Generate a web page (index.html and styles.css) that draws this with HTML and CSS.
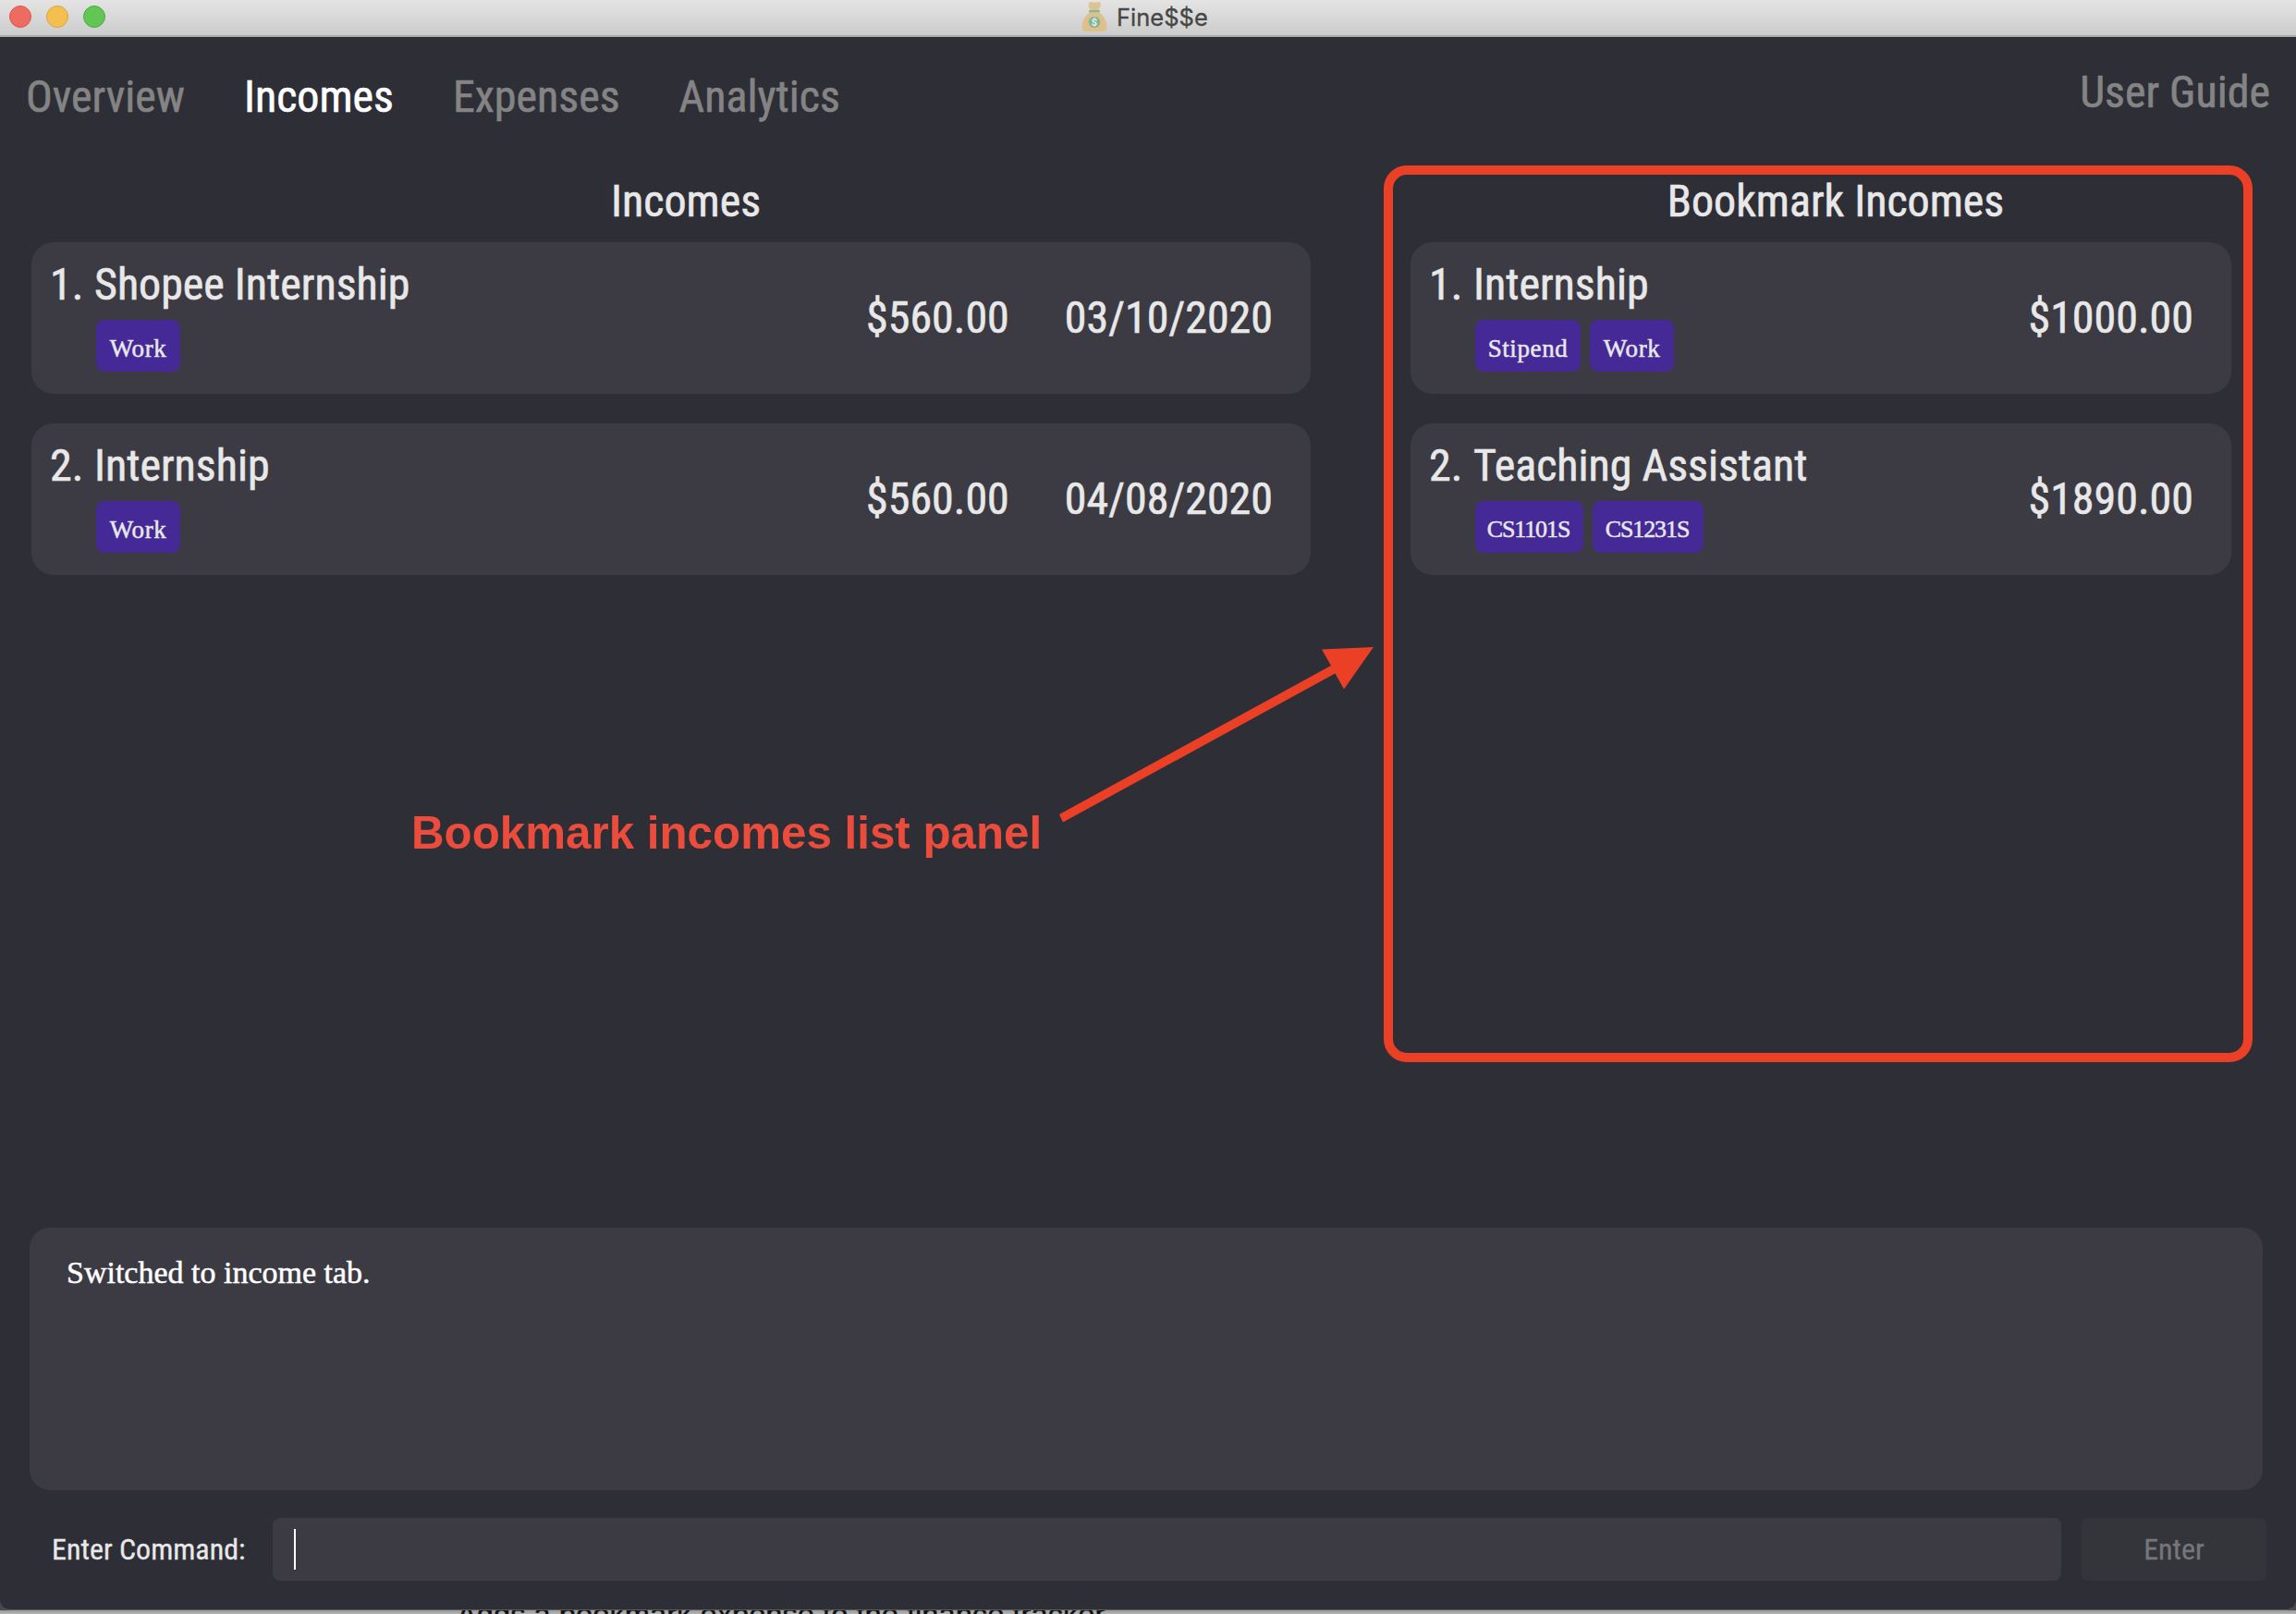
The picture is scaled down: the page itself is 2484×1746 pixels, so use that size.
FILE: index.html
```html
<!DOCTYPE html>
<html lang="en">
<head>
<meta charset="utf-8">
<title>Fine$$e</title>
<link rel="stylesheet" href="styles.css">
</head>
<body>
<div class="window">
  <header class="titlebar">
    <div class="lights"><i class="light red"></i><i class="light yellow"></i><i class="light green"></i></div>
    <div class="title">
      <svg class="bag" viewBox="0 0 28 32" width="28" height="32">
        <path d="M8 1.500Q9 0 11 .3Q14 1 17 .3Q20-.2 21 1.500Q21 5 18.500 9H9.500Q7 5 8 1.500Z" fill="#dcc394"/>
        <path d="M9 11H19Q27 18 27.500 26Q28 32 22 32H6Q0 32 .5 26Q1 18 9 11Z" fill="#dec08c"/>
        <rect x="8" y="9" width="12" height="2.200" rx="1" fill="#82baa0"/>
        <circle cx="14" cy="22" r="6.200" fill="#82b597"/>
        <text x="14" y="26.200" text-anchor="middle" class="bag-sign">$</text>
      </svg>
      <span class="title-text">Fine$$e</span>
    </div>
  </header>
  <nav class="nav">
    <div class="tabs">
      <a class="tab">Overview</a><a class="tab active">Incomes</a><a class="tab">Expenses</a><a class="tab">Analytics</a>
    </div>
    <a class="tab guide">User Guide</a>
  </nav>
  <main class="panels">
    <section class="panel incomes">
      <h2 class="heading">Incomes</h2>
      <article class="card">
        <span class="index">1.</span>
        <div class="info"><div class="name">Shopee Internship</div><div class="tags"><span class="tag">Work</span></div></div>
        <span class="amount">$560.00</span><span class="date">03/10/2020</span>
      </article>
      <article class="card">
        <span class="index">2.</span>
        <div class="info"><div class="name">Internship</div><div class="tags"><span class="tag">Work</span></div></div>
        <span class="amount">$560.00</span><span class="date">04/08/2020</span>
      </article>
    </section>
    <section class="panel bookmarks">
      <h2 class="heading">Bookmark Incomes</h2>
      <article class="card">
        <span class="index">1.</span>
        <div class="info"><div class="name">Internship</div><div class="tags"><span class="tag stipend">Stipend</span><span class="tag">Work</span></div></div>
        <span class="amount">$1000.00</span>
      </article>
      <article class="card">
        <span class="index">2.</span>
        <div class="info"><div class="name">Teaching Assistant</div><div class="tags"><span class="tag module">CS1101S</span><span class="tag module wide">CS1231S</span></div></div>
        <span class="amount">$1890.00</span>
      </article>
    </section>
  </main>
  <section class="result"><span class="result-text">Switched to income tab.</span></section>
  <footer class="command">
    <label class="label">Enter Command:</label>
    <div class="input"><i class="caret"></i></div>
    <button class="enter">Enter</button>
  </footer>
</div>
<div class="behind"><span class="behind-text">Adds a bookmark expense to the finance tracker.</span></div>
<div class="highlight"></div>
<svg class="arrow" width="345" height="195" viewBox="1143 697 345 195">
  <path d="M1146 881L1440 720L1430 702.500L1486 700L1454 745.500L1444.500 728.500L1150 889.500Z" fill="#eb4025"/>
</svg>
<div class="callout">Bookmark incomes list panel</div>
</body>
</html>
```
FILE: styles.css
```css
* { box-sizing: border-box; }
body {
  margin: 0;
  width: 2484px;
  height: 1746px;
  overflow: hidden;
  position: relative;
  background: #4a4a4e;
  font-family: "Roboto Condensed", Roboto, "Liberation Sans", sans-serif;
  font-stretch: 75%;
  color: #e8e8e8;
}
.window {
  height: 1742px;
  background: #2e2e37;
  border-bottom: 1px solid #5c5c60;
  border-radius: 0 0 10px 10px;
  display: flex;
  flex-direction: column;
}
.titlebar {
  height: 40px;
  background: linear-gradient(#e4e4e4, #cccccc);
  border-bottom: 2px solid #adadad;
  display: grid;
  grid-template-columns: 1170px auto 1fr;
}
.lights { display: flex; gap: 16px; padding: 6px 0 0 10px; }
.light { width: 24px; height: 24px; border-radius: 50%; border: 1px solid; }
.red { background: #ed6b60; border-color: #d65a50; }
.yellow { background: #f5bf4f; border-color: #d9a43f; }
.green { background: #62c655; border-color: #50a843; }
.title { display: flex; align-items: flex-start; padding-top: 2px; gap: 10px; }
.bag-sign { font: bold 11px Roboto, sans-serif; fill: #e8efe4; }
.title-text { font: 25.5px/33px Inter, sans-serif; font-stretch: 100%; color: #464646; -webkit-text-stroke: 0.3px; }
.nav { height: 140px; display: flex; justify-content: space-between; padding: 35px 28px 0; }
.tabs { display: flex; gap: 64px; }
.tab { font-size: 48px; line-height: 60px; color: #848484; white-space: nowrap; -webkit-text-stroke: 0.6px; }
.tab.active { color: #fff; }
.guide { margin-top: -5px; }
.panels { height: 1148px; display: flex; gap: 108px; padding: 8px 70px 0 34px; }
.incomes { width: 1384px; }
.bookmarks { width: 888px; }
.heading { margin: 0; height: 74px; font-size: 48px; line-height: 59px; font-weight: 400; text-align: center; -webkit-text-stroke: 0.6px; }
.incomes .heading { padding-left: 32px; }
.bookmarks .heading { padding-left: 32px; }
.card {
  height: 164px;
  margin-bottom: 32px;
  border-radius: 24px;
  background: #3c3b44;
  display: flex;
  align-items: center;
  padding: 0 41px 0 20px;
  font-size: 48px;
  line-height: 60px;
  white-space: nowrap;
  -webkit-text-stroke: 0.6px;
}
.index { width: 48px; align-self: flex-start; margin-top: 16px; }
.info { flex: 1; align-self: flex-start; margin-top: 16px; }
.tags { display: flex; gap: 10px; margin: 8px 0 0 2px; }
.tag {
  height: 56px;
  width: 91px;
  border-radius: 9px;
  background: #452997;
  font: 27px/62px "Liberation Serif", serif;
  letter-spacing: 0.6px;
  text-align: center;
  -webkit-text-stroke: 0.5px;
}
.stipend { width: 114px; }
.module { width: 117px; font-size: 26px; letter-spacing: -1.1px; padding-right: 2px; }
.module.wide { width: 120px; }
.date { margin-left: 60px; }
.result { height: 284px; margin: 0 36px 0 32px; border-radius: 22px; background: #3c3b44; padding: 27px 40px; }
.result-text { font: 34px/44px "Liberation Serif", serif; color: #fff; -webkit-text-stroke: 0.5px; }
.command { display: flex; padding: 30px 32px 0 56px; height: 98px; font-size: 32px; line-height: 68px; -webkit-text-stroke: 0.3px; }
.label { width: 239px; white-space: nowrap; }
.input { width: 1935px; height: 68px; border-radius: 8px; background: #3c3b44; padding: 12px 23px; }
.caret { display: block; width: 2px; height: 44px; background: #fff; }
.enter { margin-left: 22px; width: 200px; height: 68px; border: 0; border-radius: 8px; background: #34343b; color: #76767a; font: inherit; font-stretch: 75%; padding: 0; }
.behind { height: 4px; overflow: hidden; padding-left: 494px; background: linear-gradient(#999, #b4b4b4); }
.behind-text { display: block; margin-top: -11px; font: 32.7px/32px "Liberation Sans", sans-serif; font-stretch: 100%; color: #111; white-space: nowrap; -webkit-text-stroke: 0.4px; }
.highlight { position: absolute; left: 1497px; top: 179px; width: 940px; height: 970px; border: 10px solid #eb4025; border-radius: 25px; }
.arrow { position: absolute; left: 1143px; top: 697px; }
.callout { position: absolute; left: 445px; top: 871px; font: bold 49.3px/60px "Liberation Sans", sans-serif; color: #ec4c3c; white-space: nowrap; }
```
